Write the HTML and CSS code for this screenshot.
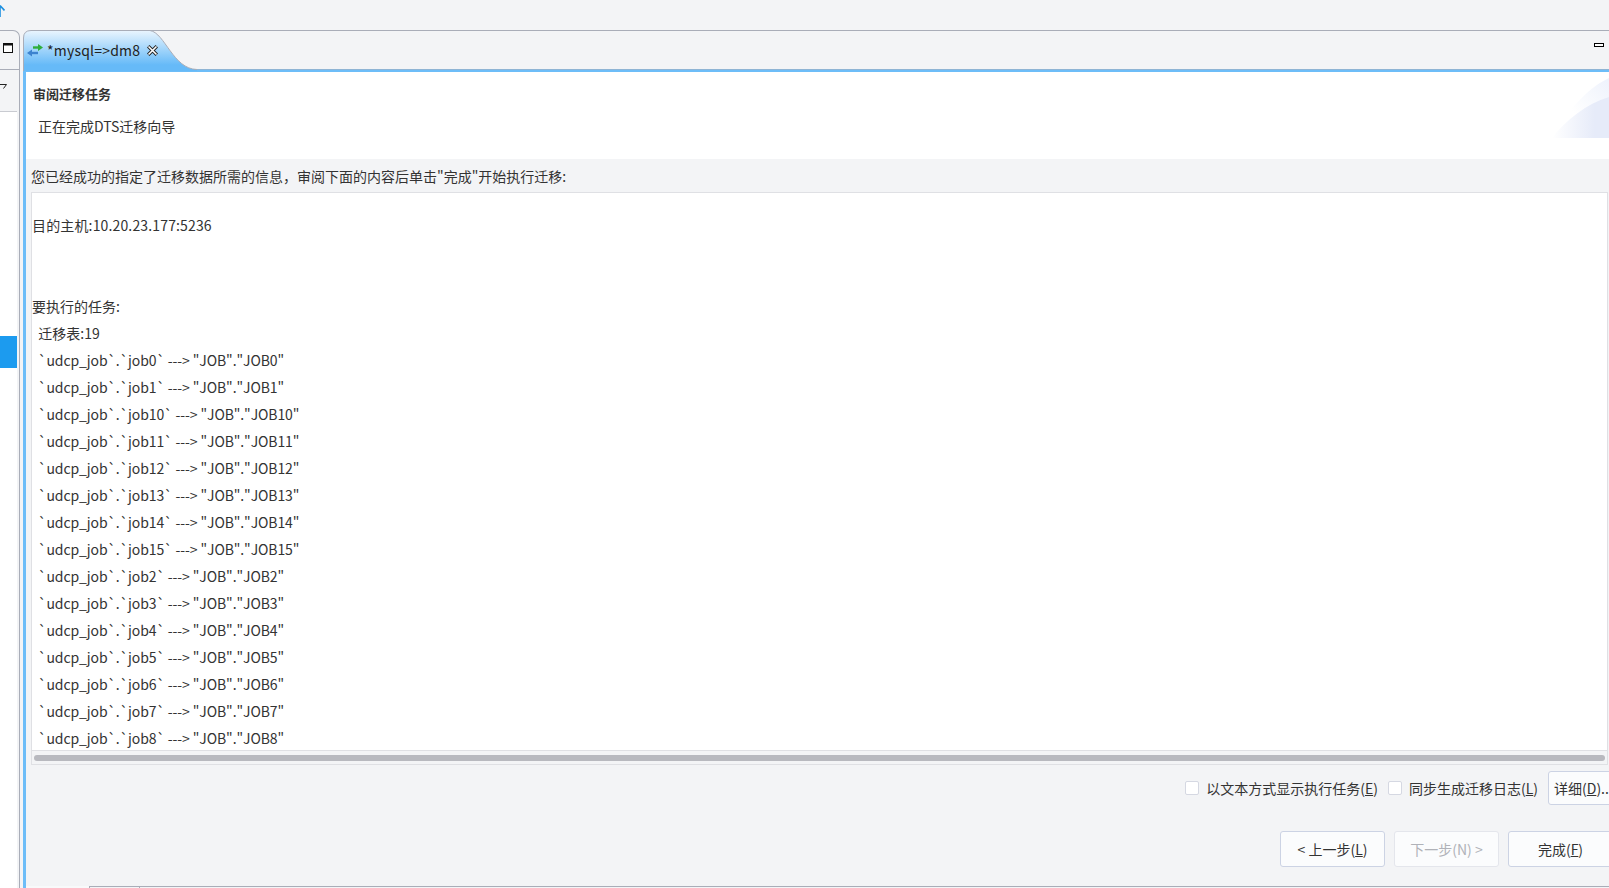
FILE: index.html
```html
<!DOCTYPE html>
<html lang="zh">
<head>
<meta charset="utf-8">
<title>mysql=&gt;dm8</title>
<link rel="stylesheet" href="styles.css">
</head>
<body>
<div class="topbar">
  <svg class="top-icon" width="5" height="14" viewBox="0 0 5 14"><path d="M0 1.5 L4.5 6.5 M0 1.5 L-4.5 6.5 M0 2 V13" stroke="#1c8fe0" stroke-width="1.6" fill="none"/></svg>
</div>
<div class="work">
  <aside class="side">
    <div class="side-tool first">
      <svg width="10" height="10" viewBox="0 0 10 10"><rect x=".5" y=".5" width="9" height="9" fill="#fff" stroke="#111"/><rect x=".5" y=".5" width="9" height="2" fill="#111"/></svg>
    </div>
    <div class="side-tool second">
      <svg width="7" height="6" viewBox="0 0 7 6"><path d="M0 .5 H6.5 L3.5 4.5" fill="none" stroke="#222"/></svg>
    </div>
    <div class="side-list"><div class="side-sel"></div></div>
  </aside>
  <main class="editor">
    <div class="tabs">
      <div class="tab">
        <svg class="tab-shape" width="180" height="41" viewBox="0 0 180 41">
          <defs><linearGradient id="tg" x1="0" y1="0" x2="0" y2="1"><stop offset="0" stop-color="#eaf5fe"/><stop offset=".85" stop-color="#66baf8"/></linearGradient></defs>
          <path d="M.5 41 V8 Q.5 .5 8 .5 H127 C142 3 150 39 174 39.5 L174 41 Z" fill="url(#tg)"/>
          <path d="M180 .5 H8 Q.5 .5 .5 8 V41" fill="none" stroke="#a9adb8"/>
          <path d="M127 .5 C142 3 150 39 174 39.5" fill="none" stroke="#a9adb8"/>
        </svg>
        <svg class="tab-icon" width="17" height="13" viewBox="0 0 17 13"><path d="M6 3.5 H12" stroke="#2fae3c" stroke-width="2.4"/><path d="M11 0 L16 3.5 L11 7 Z" fill="#2fae3c"/><path d="M11 9 H4" stroke="#3c83cf" stroke-width="2.4"/><path d="M5 5.5 L0 9 L5 12.5 Z" fill="#3c83cf"/></svg>
        <span class="tab-label">*mysql=&gt;dm8</span>
        <svg class="tab-close" width="11" height="11" viewBox="0 0 11 11"><path d="M1.2 1.2 L9.8 9.8 M9.8 1.2 L1.2 9.8" stroke="#222" stroke-width="3.4"/><path d="M1.5 1.5 L9.5 9.5 M9.5 1.5 L1.5 9.5" stroke="#fff" stroke-width="1.6"/></svg>
      </div>
      <div class="tabs-rest"><span class="minimize"></span></div>
    </div>
    <div class="accent"></div>
    <div class="panel">
      <header class="wiz-head">
        <h1 class="wiz-title">审阅迁移任务</h1>
        <p class="wiz-sub">正在完成DTS迁移向导</p>
        <svg class="wiz-art" width="57" height="60" viewBox="0 0 57 60">
          <defs><linearGradient id="wg" x1="0" y1="0" x2="1" y2="0"><stop offset="0" stop-color="#fff"/><stop offset=".75" stop-color="#e6ebf9"/></linearGradient>
          <linearGradient id="wg2" x1="0" y1="1" x2="1" y2="0"><stop offset=".4" stop-color="#fff"/><stop offset="1" stop-color="#eef2fc"/></linearGradient></defs>
          <path d="M0 60 C12 38 32 12 57 0 V60 Z" fill="url(#wg2)"/>
          <path d="M0 60 C14 42 34 26 57 19 V60 Z" fill="url(#wg)"/>
        </svg>
      </header>
      <div class="wiz-body">
        <div class="msg">您已经成功的指定了迁移数据所需的信息，审阅下面的内容后单击"完成"开始执行迁移:</div>
        <div class="box">
          <div class="box-text">
            <div class="row host">目的主机:10.20.23.177:5236</div>
            <div class="row"></div>
            <div class="row"></div>
            <div class="row">要执行的任务:</div>
            <div class="row">  迁移表:19</div>
            <div class="row job">  `udcp_job`.`job0` ---&gt; "JOB"."JOB0"</div>
            <div class="row job">  `udcp_job`.`job1` ---&gt; "JOB"."JOB1"</div>
            <div class="row job">  `udcp_job`.`job10` ---&gt; "JOB"."JOB10"</div>
            <div class="row job">  `udcp_job`.`job11` ---&gt; "JOB"."JOB11"</div>
            <div class="row job">  `udcp_job`.`job12` ---&gt; "JOB"."JOB12"</div>
            <div class="row job">  `udcp_job`.`job13` ---&gt; "JOB"."JOB13"</div>
            <div class="row job">  `udcp_job`.`job14` ---&gt; "JOB"."JOB14"</div>
            <div class="row job">  `udcp_job`.`job15` ---&gt; "JOB"."JOB15"</div>
            <div class="row job">  `udcp_job`.`job2` ---&gt; "JOB"."JOB2"</div>
            <div class="row job">  `udcp_job`.`job3` ---&gt; "JOB"."JOB3"</div>
            <div class="row job">  `udcp_job`.`job4` ---&gt; "JOB"."JOB4"</div>
            <div class="row job">  `udcp_job`.`job5` ---&gt; "JOB"."JOB5"</div>
            <div class="row job">  `udcp_job`.`job6` ---&gt; "JOB"."JOB6"</div>
            <div class="row job">  `udcp_job`.`job7` ---&gt; "JOB"."JOB7"</div>
            <div class="row job">  `udcp_job`.`job8` ---&gt; "JOB"."JOB8"</div>
          </div>
          <div class="hscroll"><div class="thumb"></div></div>
        </div>
        <div class="options">
          <label class="check wide"><span class="checkbox"></span>以文本方式显示执行任务(<u>E</u>)</label>
          <label class="check"><span class="checkbox"></span>同步生成迁移日志(<u>L</u>)</label>
          <div class="btn details">详细(<u>D</u>)...</div>
        </div>
        <div class="nav">
          <div class="btn">&lt; 上一步(<u>L</u>)</div>
          <div class="btn disabled">下一步(N) &gt;</div>
          <div class="btn finish">完成(<u>F</u>)</div>
        </div>
      </div>
      <div class="bottom-strip"><div class="bottom-active"></div><div class="bottom-tab"></div><div class="bottom-rest"></div></div>
    </div>
  </main>
</div>
</body>
</html>
```

FILE: styles.css
```css
* { box-sizing: border-box; }
html, body { margin: 0; height: 100%; }
body {
  width: 1609px;
  height: 888px;
  overflow: hidden;
  display: flex;
  flex-direction: column;
  background: #f3f4f6;
  color: #333;
  font: 14px/20px "Noto Sans CJK SC", "Noto Sans", sans-serif;
}
.topbar { height: 30px; flex: none; }
.top-icon { display: block; margin-top: 4px; overflow: hidden; }
.work { flex: 1; display: flex; min-height: 0; }

.side {
  width: 20px;
  flex: none;
  display: flex;
  flex-direction: column;
  padding-right: 2px;
  border-top: 1px solid #a9adb8;
  border-right: 1px solid #a9adb8;
  border-top-right-radius: 7px;
}
.side-tool { display: flex; align-items: flex-start; }
.side-tool.first { height: 39px; padding: 12px 0 0 3px; border-bottom: 1px solid #a9adb8; margin-right: -2px; }
.side-tool.second { height: 42px; padding: 14px 0 0 0; border-bottom: 1px solid #c9cbd1; }
.side-list { flex: 1; background: #fff; padding-top: 224px; }
.side-sel { height: 32px; background: #1c9bef; }

.editor { flex: 1; min-width: 0; margin-left: 3px; display: flex; flex-direction: column; }
.tabs { height: 39px; flex: none; display: flex; }
.tab {
  position: relative;
  width: 180px;
  flex: none;
  display: flex;
  align-items: center;
  padding: 1px 0 0 4px;
}
.tab-shape { position: absolute; left: 0; top: 0; }
.tab-icon, .tab-label, .tab-close { position: relative; }
.tab-icon { margin-right: 3px; }
.tab-label { color: #222; letter-spacing: .2px; }
.tab-close { margin-left: 7px; }
.tabs-rest {
  flex: 1;
  border-top: 1px solid #a9adb8;
  display: flex;
  justify-content: flex-end;
  padding: 12px 5px 0 0;
}
.minimize { width: 10px; height: 4px; border: 1px solid #000; background: #fff; }
.accent { height: 3px; flex: none; background: #6dbdf8; border-top: 1px solid #8fb4d4; }

.panel {
  flex: 1;
  min-height: 0;
  display: flex;
  flex-direction: column;
  border-left: 3px solid #6dbdf8;
}
.wiz-head {
  position: relative;
  height: 87px;
  flex: none;
  background: #fff;
  padding: 13px 0 0 7px;
}
.wiz-title { margin: 0; font-size: 13px; line-height: 18px; font-weight: 700; color: #333; }
.wiz-sub { margin: 13px 0 0 5px; line-height: 20px; }
.wiz-art { position: absolute; right: 0; top: 6px; }

.wiz-body { flex: 1; min-height: 0; padding: 0 1px 0 5px; overflow: hidden; }
.msg { height: 33px; line-height: 35px; white-space: nowrap; }
.box { height: 573px; border: 1px solid #dfe0e4; display: flex; flex-direction: column; }
.box-text {
  height: 558px;
  flex: none;
  overflow: hidden;
  background: #fff;
  border-bottom: 1px solid #dfe0e4;
  padding: 19px 0 0;
}
.row { height: 27px; line-height: 27px; white-space: pre; }
.host { letter-spacing: .15px; }
.job { letter-spacing: -.1px; }
.hscroll { flex: 1; padding: 4px 2px 0 2px; }
.thumb { height: 6px; background: #b8b9bf; border-radius: 3px; }

.options {
  display: flex;
  align-items: center;
  justify-content: flex-end;
  margin: 6px -32px 0 0;
  height: 34px;
  white-space: nowrap;
}
.check { display: flex; align-items: center; margin-right: 10px; }
.check.wide { margin-right: 10px; }
.checkbox {
  width: 14px;
  height: 14px;
  margin: -1px 7px 0 0;
  background: #fff;
  border: 1px solid #d5d8e2;
  border-radius: 2px;
}
.btn {
  width: 105px;
  height: 36px;
  flex: none;
  display: flex;
  align-items: center;
  justify-content: center;
  background: #fbfcfd;
  border: 1px solid #ccd3e4;
  border-radius: 3px;
  white-space: pre;
}
.details { width: 92px; height: 34px; justify-content: flex-start; padding-left: 5px; }
.nav { display: flex; justify-content: flex-end; gap: 9px; margin: 26px -5px 0 0; }
.disabled { color: #b0b2b8; border-color: #e4e6ec; }
.bottom-strip { margin-top: auto; height: 2px; flex: none; display: flex; }
.bottom-active { width: 63px; background: #f8f9fa; }
.bottom-tab { width: 51px; border: 1px solid #a9adb8; border-bottom: 0; }
.bottom-rest { flex: 1; border-top: 1px solid #a9adb8; }
```
